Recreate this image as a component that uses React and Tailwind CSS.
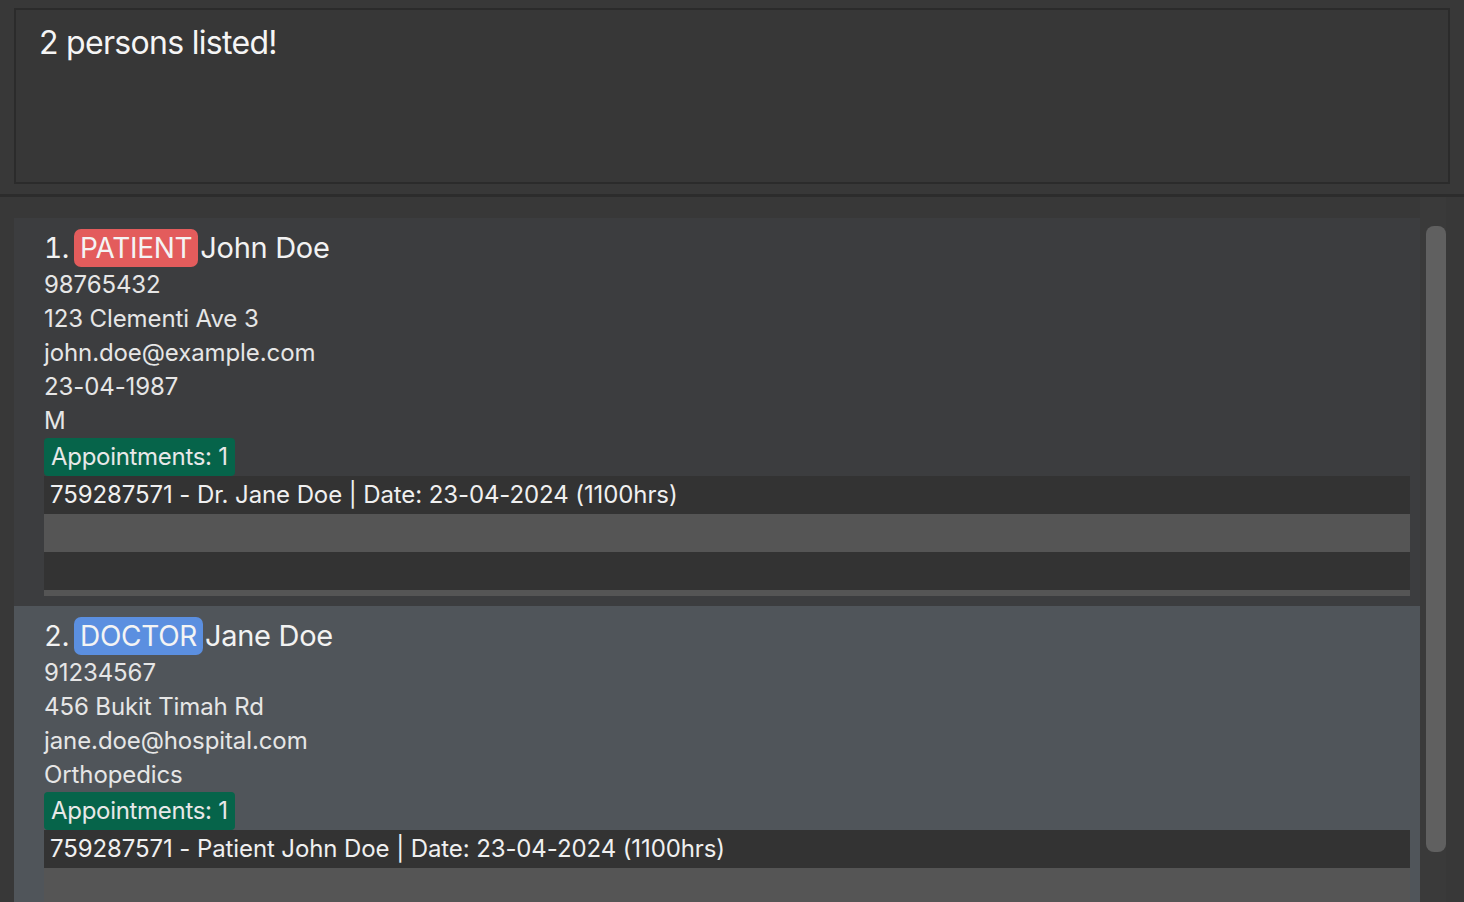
import React from "react";

const font = { fontFamily: "Inter, 'Noto Sans', sans-serif" };

function Card({ index, role, roleClass, name, details, appts, bg, rows }) {
  return (
    <div className={`${bg} pl-[30px] pr-[10px] pt-[10px] pb-[10px]`}>
      <div className="h-[40px] flex items-center text-[28px] text-[#f2f2f2] tracking-[-0.3px]">
        <span className="tabular-nums">{index}.</span>
        <span className={`ml-[5px] mr-[2px] h-[38px] flex items-center px-[6px] rounded-[7px] ${roleClass} text-[#f4f4f4]`}>
          {role}
        </span>
        <span className="text-[29px]">{name}</span>
      </div>
      {details.map((d) => (
        <div key={d} className="h-[34px] leading-[34px] text-[24px] text-[#e6e6e6] tracking-[-0.1px]">
          {d}
        </div>
      ))}
      <div className="flex">
        <div className="h-[38px] flex items-center px-[7px] rounded-[4px] bg-[#06644a] text-[24px] text-[#e8e8e8] tracking-[-0.3px]">
          Appointments: 1
        </div>
      </div>
      <div className="flex flex-col">
        <div className="h-[38px] flex items-center pl-[6px] bg-[#333333] text-[24px] text-[#f0f0f0] tracking-[-0.1px]">
          {appts}
        </div>
        {rows.map((c, i) => (
          <div key={i} className={c}></div>
        ))}
      </div>
    </div>
  );
}

export default function App() {
  return (
    <div className="w-[1464px] h-[902px] bg-[#383838] overflow-hidden flex flex-col" style={font}>
      <div className="px-[14px] pt-[8px] pb-[10px]">
        <div className="h-[176px] w-[1436px] border-2 border-[#2b2b2b] bg-[#373737] pl-[23px] pt-[14px]">
          <div className="text-[32px] leading-[38px] text-[#f5f5f5] tracking-[-0.7px]">2 persons listed!</div>
        </div>
      </div>
      <div className="h-[3px] bg-[#2c2c2c]"></div>
      <div className="flex flex-1 min-h-0">
        <div className="ml-[14px] w-[1406px] pt-[21px] flex flex-col">
          <Card
            index={1}
            role="PATIENT"
            roleClass="bg-[#e35c5c]"
            name="John Doe"
            details={["98765432", "123 Clementi Ave 3", "john.doe@example.com", "23-04-1987", "M"]}
            appts="759287571 - Dr. Jane Doe | Date: 23-04-2024 (1100hrs)"
            bg="bg-[#3c3d3f]"
            rows={["h-[38px] bg-[#555555]", "h-[38px] bg-[#333333]", "h-[6px] bg-[#555555]"]}
          />
          <Card
            index={2}
            role="DOCTOR"
            roleClass="bg-[#5b8fe0]"
            name="Jane Doe"
            details={["91234567", "456 Bukit Timah Rd", "jane.doe@hospital.com", "Orthopedics"]}
            appts="759287571 - Patient John Doe | Date: 23-04-2024 (1100hrs)"
            bg="bg-[#50555a]"
            rows={["h-[38px] bg-[#555555]", "h-[38px] bg-[#333333]"]}
          />
        </div>
        <div className="w-[26px] bg-[#3a3a3a] pl-[6px] pt-[29px]">
          <div className="w-[20px] h-[626px] rounded-[8px] bg-[#606060]"></div>
        </div>
      </div>
    </div>
  );
}
